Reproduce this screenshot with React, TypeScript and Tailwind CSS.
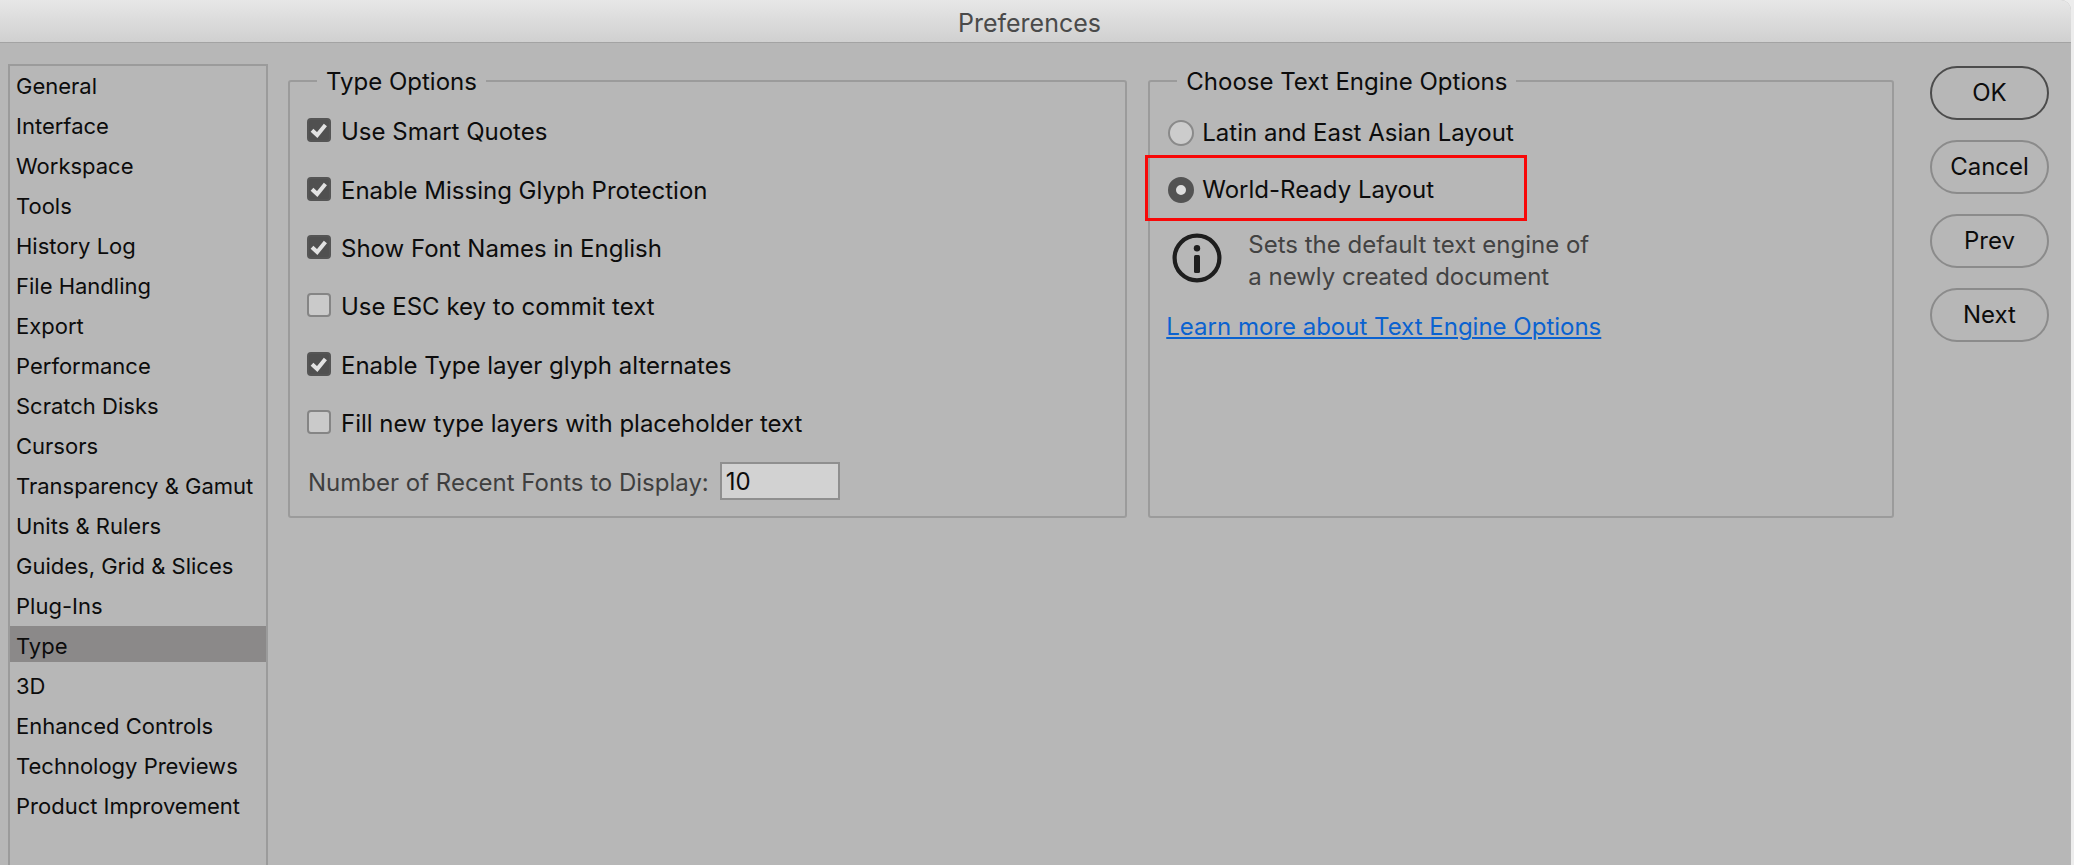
import React from "react";

const sections = [
  "General",
  "Interface",
  "Workspace",
  "Tools",
  "History Log",
  "File Handling",
  "Export",
  "Performance",
  "Scratch Disks",
  "Cursors",
  "Transparency & Gamut",
  "Units & Rulers",
  "Guides, Grid & Slices",
  "Plug-Ins",
  "Type",
  "3D",
  "Enhanced Controls",
  "Technology Previews",
  "Product Improvement",
];

const typeOptions = [
  { label: "Use Smart Quotes", checked: true },
  { label: "Enable Missing Glyph Protection", checked: true },
  { label: "Show Font Names in English", checked: true },
  { label: "Use ESC key to commit text", checked: false },
  { label: "Enable Type layer glyph alternates", checked: true },
  { label: "Fill new type layers with placeholder text", checked: false },
];

const CheckboxRow: React.FC<{ label: string; checked: boolean }> = ({
  label,
  checked,
}) => {
  return (
    <label className="flex flex-1 items-center gap-[10px]">
      <span className="grid shrink-0">
        <input
          type="checkbox"
          defaultChecked={checked}
          className="peer col-start-1 row-start-1 size-6 appearance-none rounded-[4px] border-2 border-[#858585] bg-[#cacaca] checked:border-[#555555] checked:bg-[#505050]"
        />
        <svg
          viewBox="0 0 24 24"
          className="pointer-events-none invisible col-start-1 row-start-1 size-6 peer-checked:visible"
          fill="none"
          stroke="#e2e2e2"
          strokeWidth="4"
        >
          <path d="M5 12.2 L10.2 17 L18.4 7" />
        </svg>
      </span>
      <span className="pt-1">{label}</span>
    </label>
  );
};

const RadioRow: React.FC<{ label: string; checked?: boolean }> = ({
  label,
  checked,
}) => {
  return (
    <label className="flex items-center gap-2">
      <input
        type="radio"
        name="text-engine"
        defaultChecked={checked}
        className="size-[26px] shrink-0 appearance-none rounded-full border-2 border-[#8a8a8a] bg-[#cccccc] checked:border-8 checked:border-[#535353] checked:bg-[#dedede]"
      />
      <span>{label}</span>
    </label>
  );
};

export default function App() {
  const [active, setActive] = React.useState("Type");

  return (
    <div className="min-h-screen bg-[#ededed] pr-[3px] font-['Inter','Liberation_Sans',sans-serif] text-[24px] leading-8 text-[#0c0c0c]">
      <div className="flex min-h-screen flex-col overflow-hidden rounded-tr-[10px] bg-[#b7b7b7]">
        <header className="flex h-[43px] items-center justify-center border-b border-[#a3a3a3] bg-linear-to-b from-[#e7e7e7] to-[#d0d0d0] pt-1 pr-3">
          <h1 className="text-[25px] text-[#4a4a4a]">Preferences</h1>
        </header>

        <main className="flex grow pl-2 pr-[22px]">
          <nav className="mt-[21px] flex w-[260px] shrink-0 flex-col gap-1 border-2 border-b-0 border-[#9b9b9b] text-[22px]">
            {sections.map((name) => (
              <button
                key={name}
                type="button"
                onClick={() => setActive(name)}
                className={
                  name === active
                    ? "h-9 whitespace-nowrap bg-[#8b8989] pl-[6px] pt-1 text-left"
                    : "h-9 whitespace-nowrap pl-[6px] pt-1 text-left"
                }
              >
                {name}
              </button>
            ))}
          </nav>

          <div className="ml-5 mt-[21px] flex grow items-start gap-[21px]">
            <fieldset className="h-[454px] min-w-0 flex-[840] rounded-[3px] border-2 border-[#9b9b9b] pl-[17px]">
              <legend className="ml-[10px] px-[9px] pt-[2px]">
                Type Options
              </legend>
              <div className="flex h-full flex-col pt-[3px] pb-[6px]">
                {typeOptions.map((option) => (
                  <CheckboxRow key={option.label} {...option} />
                ))}
                <label className="flex flex-1 items-center gap-[11px] pl-px text-[#3f3f3f]">
                  <span className="pt-1">Number of Recent Fonts to Display:</span>
                  <input
                    type="text"
                    defaultValue="10"
                    className="h-[38px] w-[120px] border-2 border-[#8f8f8f] bg-[#d2d2d2] px-1 pt-[2px] text-[#0c0c0c]"
                  />
                </label>
              </div>
            </fieldset>

            <fieldset className="h-[454px] min-w-0 flex-[745] rounded-[3px] border-2 border-[#9b9b9b] pl-4">
              <legend className="ml-[11px] px-[9px] pt-[2px]">
                Choose Text Engine Options
              </legend>
              <div className="flex h-[57px] items-center pt-3 pl-[2px]">
                <RadioRow label="Latin and East Asian Layout" />
              </div>
              <div className="-ml-[21px] flex h-[66px] w-[382px] items-center border-3 border-[#f80808] pl-5 pt-1">
                <RadioRow label="World-Ready Layout" checked />
              </div>
              <div className="flex gap-[26px] pl-[6px] pt-2">
                <svg
                  viewBox="0 0 50 50"
                  className="mt-1 size-[50px] shrink-0"
                  fill="none"
                >
                  <circle cx="25" cy="25" r="22.4" stroke="#1e1e1e" strokeWidth="4.2" />
                  <circle cx="25" cy="15.3" r="3.2" fill="#1e1e1e" />
                  <rect x="22" y="22" width="6" height="18" rx="1.5" fill="#1e1e1e" />
                </svg>
                <p className="text-[#424242]">
                  Sets the default text engine of
                  <br />a newly created document
                </p>
              </div>
              <a
                href="#"
                className="mt-[18px] inline-block text-[#0a62d0] underline decoration-2 underline-offset-2"
              >
                Learn more about Text Engine Options
              </a>
            </fieldset>
          </div>

          <div className="ml-9 mt-[23px] flex w-[119px] shrink-0 flex-col gap-5">
            <button
              type="button"
              className="h-[54px] rounded-full border-2 border-[#4c4c4c]"
            >
              OK
            </button>
            {["Cancel", "Prev", "Next"].map((name) => (
              <button
                key={name}
                type="button"
                className="h-[54px] rounded-full border-2 border-[#8b8b8b]"
              >
                {name}
              </button>
            ))}
          </div>
        </main>
      </div>
    </div>
  );
}
